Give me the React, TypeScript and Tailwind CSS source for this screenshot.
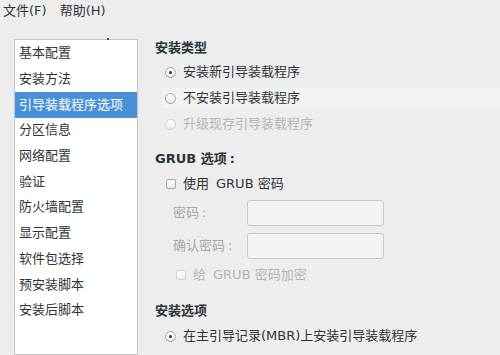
import React from 'react';

const items = [
  '基本配置',
  '安装方法',
  '引导装载程序选项',
  '分区信息',
  '网络配置',
  '验证',
  '防火墙配置',
  '显示配置',
  '软件包选择',
  '预安装脚本',
  '安装后脚本',
];

function Radio({ checked, disabled }: { checked?: boolean; disabled?: boolean }) {
  return (
    <span
      className={`flex h-[11px] w-[11px] shrink-0 items-center justify-center rounded-full border bg-gradient-to-b from-white to-[#ececec] ${
        disabled ? 'border-[#d0d0d0]' : 'border-[#a4a4a4]'
      }`}
    >
      {checked && <span className="h-[3px] w-[3px] rounded-full bg-[#2e3436]" />}
    </span>
  );
}

function Check({ disabled }: { disabled?: boolean }) {
  return (
    <span
      className={`h-[10px] w-[10px] shrink-0 rounded-[2px] border bg-gradient-to-b from-white to-[#ececec] ${
        disabled ? 'border-[#d2d2d2]' : 'border-[#a4a4a4]'
      }`}
    />
  );
}

// fullwidth colon drawn centred, the way the original font does
function Colon() {
  return <span className="ml-[3px]">:</span>;
}

export default function App() {
  return (
    <div
      className="flex h-[355px] w-[500px] flex-col overflow-hidden bg-[#ededed] text-[13px] text-[#2e3436]"
      style={{ fontFamily: '"DejaVu Sans", "Noto Sans CJK SC", sans-serif' }}
    >
      {/* menu bar */}
      <div className="flex h-[22px] shrink-0 items-center gap-[13px] pl-[3px] leading-[18px]">
        <span>文件(F)</span>
        <span>帮助(H)</span>
      </div>

      <div className="flex flex-1">
        {/* sidebar list */}
        <div className="relative ml-[14px] mt-[17px] w-[124px] shrink-0 border border-[#c4c4c4] bg-white pt-[0.5px]">
          <span className="absolute left-[92px] top-[-2px] h-[2px] w-[2px] rounded-full bg-[#222]" />
          {items.map((item, i) => (
            <div
              key={item}
              className={`flex h-[25.7px] items-center pl-[4px] leading-[18px] ${
                i === 2 ? 'bg-[#4a90d9] text-white' : ''
              }`}
            >
              {item}
            </div>
          ))}
        </div>

        {/* options */}
        <div className="ml-[17px] flex flex-1 flex-col pt-[17px] leading-[18px]">
          <div className="font-bold">安装类型</div>

          <div className="ml-[7px] mt-[5px] flex h-[20px] items-center gap-[7px] pl-[3px]">
            <Radio checked />
            <span>安装新引导装载程序</span>
          </div>
          <div className="ml-[7px] mt-[6px] flex h-[20px] items-center gap-[7px] bg-[#f2f2f2] pl-[3px]">
            <Radio />
            <span>不安装引导装载程序</span>
          </div>
          <div className="ml-[7px] mt-[6px] flex h-[20px] items-center gap-[7px] pl-[3px] text-[#b4b4b4]">
            <Radio disabled />
            <span>升级现存引导装载程序</span>
          </div>

          <div className="mt-[16px] font-bold">
            GRUB 选项<Colon />
          </div>

          <div className="ml-[11px] mt-[6px] flex h-[20px] items-center gap-[7px]">
            <Check />
            <span>
              使用<span className="ml-[7px]">GRUB 密码</span>
            </span>
          </div>

          <div className="mt-[6px] flex h-[26px] items-center text-[#a6a6a6]">
            <span className="ml-[18px] w-[74px]">
              密码<Colon />
            </span>
            <div className="h-[26px] w-[137px] rounded-[3px] border border-[#c8c8c8] bg-[#f3f3f2]" />
          </div>
          <div className="mt-[7px] flex h-[26px] items-center text-[#a6a6a6]">
            <span className="ml-[18px] w-[74px]">
              确认密码<Colon />
            </span>
            <div className="h-[26px] w-[137px] rounded-[3px] border border-[#c8c8c8] bg-[#f3f3f2]" />
          </div>

          <div className="ml-[21px] mt-[6px] flex h-[20px] items-center gap-[7px] text-[#b4b4b4]">
            <Check disabled />
            <span>
              给<span className="ml-[7px]">GRUB 密码加密</span>
            </span>
          </div>

          <div className="mt-[17px] font-bold">安装选项</div>

          <div className="ml-[7px] mt-[6px] flex h-[20px] items-center gap-[7px] pl-[3px]">
            <Radio checked />
            <span>在主引导记录(MBR)上安装引导装载程序</span>
          </div>
        </div>
      </div>
    </div>
  );
}
